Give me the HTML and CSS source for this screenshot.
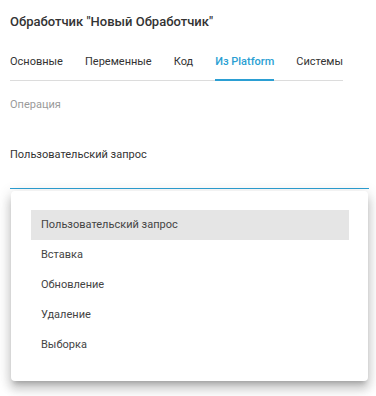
FILE: index.html
```html
<!DOCTYPE html>
<html lang="ru">

<head>
    <meta charset="UTF-8">
    <title>Обработчик</title>
    <link rel="stylesheet" href="styles.css">
</head>

<body>
    <div class="dialog">
        <h2 class="title">Обработчик "Новый Обработчик"</h2>

        <div class="tabs">
            <div class="tab">Основные</div>
            <div class="tab">Переменные</div>
            <div class="tab">Код</div>
            <div class="tab active">Из Platform</div>
            <div class="tab">Системы</div>
        </div>

        <div class="field">
            <div class="label">Операция</div>
            <div class="value">Пользовательский запрос</div>
        </div>

        <ul class="menu">
            <li class="selected">Пользовательский запрос</li>
            <li>Вставка</li>
            <li>Обновление</li>
            <li>Удаление</li>
            <li>Выборка</li>
        </ul>
    </div>
</body>

</html>
```

FILE: styles.css
```css
body,
html {
    margin: 0;
    background-color: #fff;
    font-family: Roboto, "Liberation Sans", sans-serif;
    color: #333;
}

.dialog {
    padding: 12px 7px 20px 10px;
}

.title {
    margin: 0;
    font-size: 13px;
    font-weight: 500;
    line-height: 20px;
    color: #333;
}

.tabs {
    display: inline-flex;
    gap: 22px;
    margin-top: 22px;
    border-bottom: 1px solid #dcdcdc;
}

.tab {
    font-size: 11px;
    line-height: 16px;
    padding-bottom: 9px;
    margin-bottom: -1px;
    border-bottom: 2px solid transparent;
}

.tab.active {
    color: #2b9fd3;
    font-weight: 500;
    border-bottom-color: #2b9fd3;
}

.field {
    margin-top: 16px;
    font-size: 11px;
    line-height: 16px;
    border-bottom: 1px solid #2b9fd3;
    padding-bottom: 25px;
}

.label {
    color: #9a9a9a;
}

.value {
    margin-top: 34px;
    color: #333;
}

.menu {
    list-style-type: none;
    margin: 2px 1px 0 1px;
    padding: 19px 19px 21px 20px;
    background-color: #fff;
    border-radius: 4px;
    box-shadow: 0 5px 5px -3px rgba(0, 0, 0, 0.2),
        0 8px 10px 1px rgba(0, 0, 0, 0.14),
        0 3px 14px 2px rgba(0, 0, 0, 0.12);
}

.menu li {
    font-size: 11px;
    line-height: 30px;
    padding-left: 10px;
    color: #444;
}

.menu li.selected {
    background-color: #e5e5e5;
}
```
